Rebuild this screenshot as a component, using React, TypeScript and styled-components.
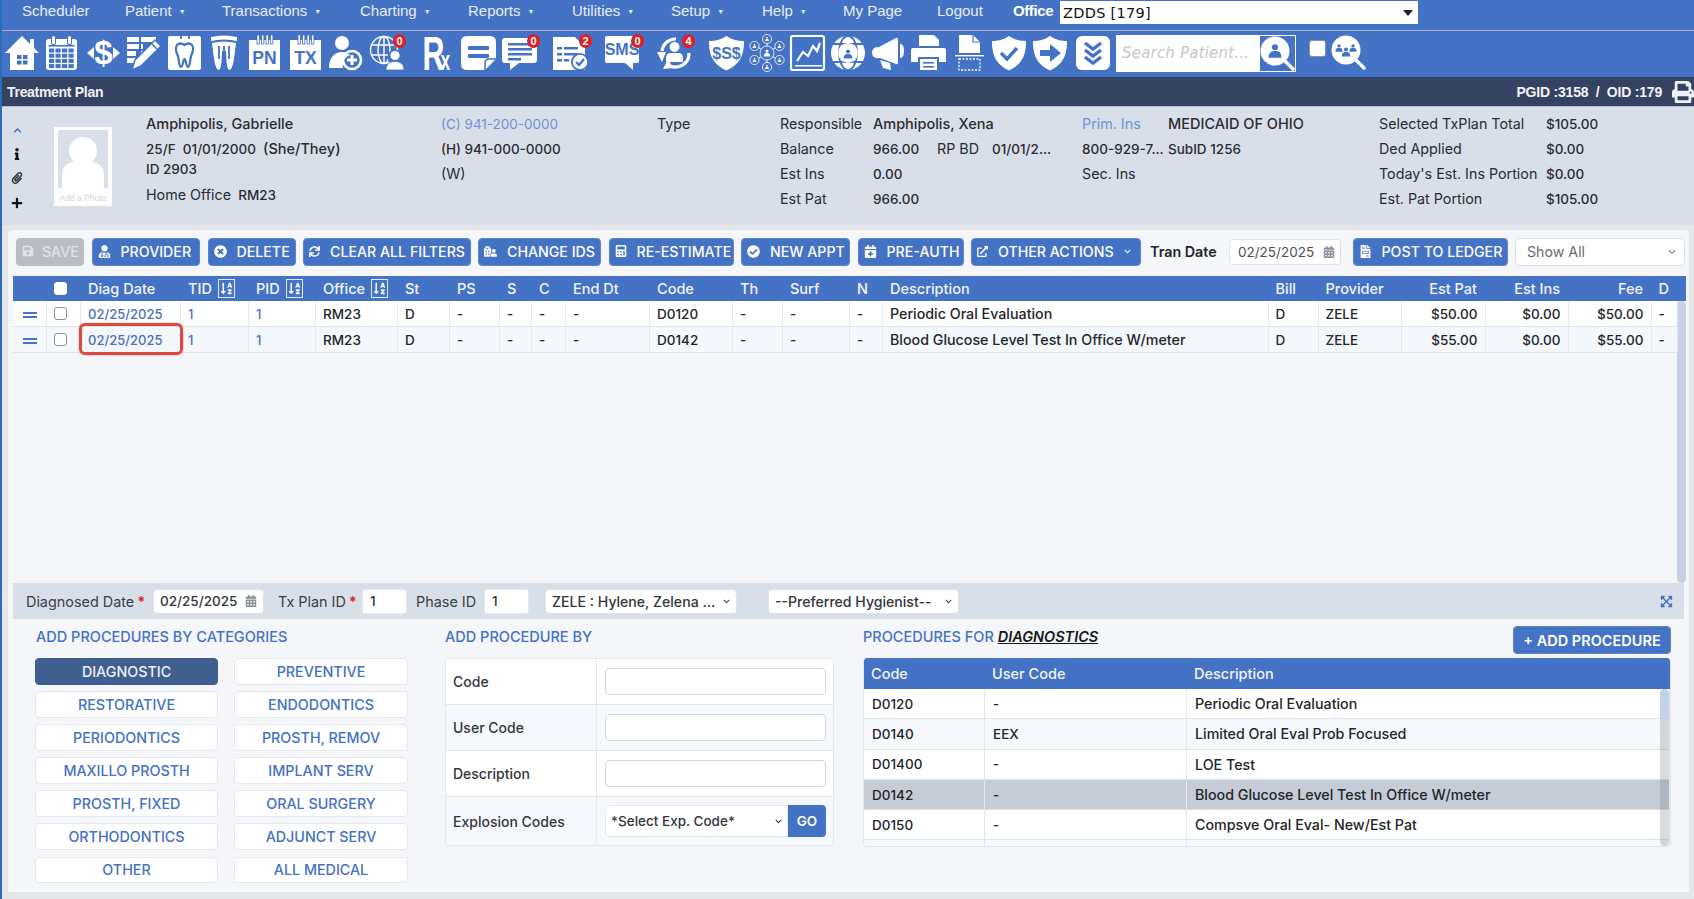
import React from 'react';
import styled, { createGlobalStyle } from 'styled-components';
import {
  FaSave, FaUserMd, FaTimesCircle, FaSync, FaCalculator, FaCheckCircle, FaCalendarPlus,
  FaExternalLinkAlt, FaCalendarAlt, FaFileInvoice, FaSortAlphaDown, FaInfo, FaPaperclip,
  FaPlus, FaChevronUp, FaChevronDown, FaExpandArrowsAlt, FaPrint, FaHospitalUser,
} from 'react-icons/fa';

const BLUE = '#4472c4';

const Global = createGlobalStyle`
  html, body { margin: 0; padding: 0; background: #fff; }
  * { box-sizing: border-box; }
  body { font-family: Inter, "Open Sans", "Liberation Sans", sans-serif; }
`;

const Page = styled.div`
  width: 1694px; height: 899px; overflow: hidden; display: flex; flex-direction: column;
  border-left: 2px solid #2b6cb8; background: #e4e6e9; color: #23262b; font-size: 13.5px;
`;
const Nav = styled.nav`
  height: 31px; flex: none; background: ${BLUE}; border-bottom: 1px solid #a9b6cf; display: flex; align-items: flex-start;
  padding-left: 20px; font-family: "Liberation Sans", Arial, sans-serif; font-size: 15px; color: #e9eef8;
`;
const NavItem = styled.div<{ $w: number }>`
  width: ${p => p.$w}px; flex: none; line-height: 22px; white-space: nowrap;
`;
const Caret = styled.span`
  font-size: 7px; margin-left: 7px; vertical-align: 2px;
`;
const OfficeLabel = styled(NavItem)`
  font-weight: 700; color: #fff; letter-spacing: -0.4px;
`;
const OfficeSelect = styled.div`
  width: 358px; height: 23px; margin-top: 1px; background: #fff; color: #111; display: flex; align-items: center;
  justify-content: space-between; padding: 0 5px 0 3px; font-family: "DejaVu Sans", sans-serif; font-size: 14.5px; letter-spacing: .3px;
`;
const OfficeArrow = styled.span`
  width: 0; height: 0; border-left: 5.5px solid transparent; border-right: 5.5px solid transparent; border-top: 6px solid #222;
`;
const Toolbar = styled.div`
  height: 46px; flex: none; background: ${BLUE}; display: flex; align-items: center; padding: 0 0 2px 3px;
`;
const Tool = styled.div<{ $w: number; $ml: number }>`
  position: relative; flex: none; width: ${p => p.$w}px; height: 36px; margin-left: ${p => p.$ml}px;
  svg { display: block; overflow: visible; }
`;
const Badge = styled.span<{ $r?: number }>`
  position: absolute; top: -1px; right: ${p => p.$r ?? 0}px; width: 13px; height: 14px; border-radius: 50%;
  background: #dd1f26; color: #fff; font: 700 11px/14px "Liberation Sans", sans-serif; text-align: center;
`;
const SearchBox = styled.div`
  width: 180px; height: 37px; margin-left: 6px; background: #fff; display: flex; flex: none; justify-content: space-between;
  border: 1px solid #fff;
`;
const SearchInput = styled.input`
  width: 140px; border: 0; outline: 0; background: transparent; padding: 0 5px; font: italic 15px "DejaVu Sans", sans-serif; letter-spacing: .2px;
  &::placeholder { color: #c6c6c6; opacity: 1; }
`;
const LensBtn = styled.div`
  width: 35px; height: 35px; background: ${BLUE};
`;
const TopCheck = styled.input`
  appearance: none; flex: none; width: 17px; height: 17px; margin: 0 0 9px 13px; background: #fff; border: 1px solid #8b8f96; border-radius: 3px;
`;
const TitleBar = styled.div`
  height: 30px; flex: none; background: #364261; color: #f1f3f7; display: flex; align-items: center; justify-content: space-between;
  padding: 0 0 0 5px; font-family: "Liberation Sans", Arial, sans-serif; font-size: 14px; border-bottom: 1px solid #b6bdcc;
`;
const TitleLeft = styled.span`
  font-weight: 700; letter-spacing: -0.3px; font-size: 14px;
`;
const TitleRight = styled.div`
  display: flex; align-items: center; gap: 10px; font-weight: 700; letter-spacing: -0.2px;
`;
const Header = styled.header`
  height: 118px; flex: none; background: #d8dfe9; display: flex; padding-top: 5px; position: relative;
`;
const SideIcons = styled.div`
  width: 52px; flex: none; display: flex; flex-direction: column; align-items: center; padding: 14px 22px 0 0; gap: 12.5px; color: #111;
`;
const Photo = styled.div`
  width: 58px; height: 79px; margin-top: 15px; background: #fff; flex: none; padding: 3px 4px 0; display: flex; flex-direction: column;
  align-items: center; font: 8.5px "Liberation Sans", sans-serif; color: #d0d6e0;
`;
const PhotoInner = styled.div`
  width: 100%; height: 58px; background: #d8dfe9; display: flex; align-items: flex-end; justify-content: center; margin-bottom: 5px;
`;
const InfoCol = styled.div<{ $w: number; $ml?: number }>`
  width: ${p => p.$w}px; margin-left: ${p => p.$ml ?? 0}px; flex: none;
`;
const InfoLine = styled.div<{ $h?: number; $top?: number }>`
  height: ${p => p.$h ?? 25}px; margin-top: ${p => p.$top ?? 0}px; line-height: ${p => p.$h ?? 24}px; white-space: nowrap; display: flex; align-items: baseline;
  font-weight: 500; color: #2a2d33;
`;
const Dim = styled.span`
  font-weight: 400; font-size: 14.3px;
`;
const Strong = styled.span`
  font-size: 14.5px;
`;
const Lab = styled.span<{ $w: number; $c?: string }>`
  width: ${p => p.$w}px; flex: none; color: ${p => p.$c ?? 'inherit'};
`;
const PhoneLink = styled.span`
  color: #6f93d8; font-weight: 400;
`;
const Main = styled.main`
  height: 664px; flex: none; margin: 4px 4px 0 5px; background: #f4f6f9; border: 1px solid #e1e5ea; border-top-color: #dfe3e9; border-radius: 5px 5px 0 0;
  padding: 7px 0 0 5px; display: flex; flex-direction: column;
`;
const ActionRow = styled.div`
  height: 29px; flex: none; display: flex; align-items: center; gap: 7.5px; padding-left: 3px;
`;
const ActionBtn = styled.button<{ $w: number; $off?: boolean; $ml?: number }>`
  width: ${p => p.$w}px; height: 28px; flex: none; margin-left: ${p => p.$ml ?? 0}px; border: 1px solid ${p => (p.$off ? '#b9bdc3' : '#5d86cf')}; border-radius: 4px;
  background: ${p => (p.$off ? '#b9bdc3' : BLUE)}; color: ${p => (p.$off ? '#dfe2e6' : '#fff')}; display: flex; align-items: center; gap: ${p => (p.$off ? 8 : 10)}px; padding: 0 0 1px 5px;
  font: 500 14.2px Inter, sans-serif; white-space: nowrap;
  svg { flex: none; }
`;
const Chev = styled.span`
  margin-left: auto; margin-right: 9px; display: flex;
`;
const TranLabel = styled.span`
  font-weight: 600; font-size: 14.3px; width: 70px; flex: none; margin: 0 1.5px; white-space: nowrap; color: #23262b;
`;
const DateBox = styled.div<{ $w: number; $ml?: number }>`
  width: ${p => p.$w}px; height: 26px; flex: none; margin-left: ${p => p.$ml ?? 0}px; background: #fff; border: 1px solid #dfe3e8; border-radius: 4px; display: flex; align-items: center; justify-content: space-between;
  padding: 0 5px 0 8px; color: #4b4f56; white-space: nowrap;
  svg { color: #8b8f96; }
`;
const ShowAll = styled(DateBox)`
  height: 28px; padding: 0 8px 0 11px; color: #666b73; font-size: 14.2px;
`;
const TEMPLATE = '34px 34px 100px 68px 67px 82px 52px 50px 32px 34px 84px 83px 50px 67px 33px 385.5px 50px 83.5px 83.5px 83px 83px';
const TableHead = styled.div`
  display: grid; grid-template-columns: ${TEMPLATE} 36px;
  height: 25px; margin: 10px 0 0 0; width: 1673px; background: ${BLUE}; color: #f2f5fb; font-weight: 500; font-size: 14.5px;
`;
const Th = styled.div<{ $right?: boolean }>`
  display: flex; align-items: center; justify-content: ${p => (p.$right ? 'flex-end' : 'flex-start')}; padding: 0 8.5px 1px 7px; gap: 6px; white-space: nowrap;
`;
const SortBox = styled.span`
  display: inline-flex; width: 17px; height: 19px; border: 1px solid #e3eaf7; align-items: center; justify-content: center;
`;
const BodyWrap = styled.div`
  height: 282px; width: 1673px; flex: none; display: flex;
`;
const Rows = styled.div`
  width: 1663px; flex: none;
`;
const Row = styled.div<{ $alt?: boolean }>`
  display: grid; grid-template-columns: ${TEMPLATE} 26px;
  height: 26px; background: ${p => (p.$alt ? '#f4f7fb' : '#fff')}; border-bottom: 1px solid #dfe4ea;
`;
const Td = styled.div<{ $right?: boolean; $link?: boolean }>`
  position: relative; display: flex; align-items: center; justify-content: ${p => (p.$right ? 'flex-end' : 'flex-start')}; padding: 0 7px;
  border-right: 1px solid #e6e9ee; white-space: nowrap; color: ${p => (p.$link ? '#4a70bb' : '#23262b')}; font-weight: 500; font-size: ${p => (p.$link ? '13px' : '13.5px')};
`;
const DescTd = styled(Td)`
  font-size: 14.25px;
`;
const Circled = styled(Td)`
  &::after { content: ''; position: absolute; left: -2px; right: -3px; top: -4px; bottom: -3px; border: 3px solid #e1473c; border-radius: 6px; box-shadow: 0 0 2px rgba(0,0,0,.35); }
`;
const Handle = styled.span`
  display: block; width: 14px; height: 6px; margin: 2px auto 0; border-top: 2px solid ${BLUE}; border-bottom: 2px solid ${BLUE};
`;
const Check = styled.input`
  appearance: none; width: 13px; height: 13px; margin: 0; background: #fff; border: 1px solid #8d9097; border-radius: 3px;
`;
const HeadCheck = styled(Check)`
  border-color: #fff;
`;
const ScrollThumb = styled.div`
  width: 9px; flex: none; margin-left: 1px; background: #c6d1e3; border-radius: 5px;
`;
const Bar = styled.div`
  height: 36px; width: 1671px; flex: none; background: #d8dfe9; display: flex; align-items: center; padding-left: 13px; color: #3c4047; position: relative;
`;
const BarLab = styled.span<{ $w: number; $ml?: number }>`
  width: ${p => p.$w}px; margin-left: ${p => p.$ml ?? 0}px; flex: none; white-space: nowrap; font-size: 14.4px;
`;
const Req = styled.b`
  color: #dd2b2b; margin-left: 3px;
`;
const BarInput = styled.input<{ $w: number; $mr: number }>`
  width: ${p => p.$w}px; height: 25px; flex: none; margin-right: ${p => p.$mr}px; background: #fff; border: 1px solid #e6e9ee; border-radius: 3px; padding: 0 7px; font: 500 13.5px Inter, sans-serif; color: #33363c;
`;
const BarSelect = styled(DateBox)`
  font-weight: 500; padding: 0 6px; color: #33363c; height: 25px; font-size: 14.1px;
  svg { color: #444; }
`;
const BarDate = styled(BarSelect)`
  font-size: 13.5px;
`;
const Expand = styled.span`
  position: absolute; right: 11px; top: 12px; color: ${BLUE}; display: flex;
`;
const Lower = styled.div`
  flex: 1; display: flex; padding-left: 23px;
`;
const Col = styled.section<{ $w: number; $ml?: number }>`
  width: ${p => p.$w}px; margin-left: ${p => p.$ml ?? 0}px; flex: none;
`;
const SecHead = styled.div`
  height: 39px; display: flex; justify-content: space-between; align-items: flex-start;
`;
const Heading = styled.h3`
  margin: 10px 0 0; font: 500 14.5px/16px Inter, sans-serif; color: ${BLUE}; white-space: nowrap;
`;
const HeadEm = styled.em`
  color: #15171b; font-weight: 600; text-decoration: underline;
`;
const AddBtn = styled.button`
  width: 158px; height: 28px; margin-top: 7px; background: ${BLUE}; border: 1px solid #5d86cf; border-radius: 4px; color: #fff; font: 600 14.5px Inter, sans-serif; white-space: nowrap; padding: 0;
`;
const CatGrid = styled.div`
  display: grid; grid-template-columns: 183px 174px; column-gap: 16px; row-gap: 6.3px; grid-auto-rows: 26.8px; margin-left: -1px;
`;
const CatBtn = styled.button<{ $on?: boolean }>`
  border: 1px solid ${p => (p.$on ? '#3f5f90' : '#e4e8ee')}; border-radius: 4px; background: ${p => (p.$on ? '#3f5f90' : '#fff')};
  color: ${p => (p.$on ? '#eef2f8' : BLUE)}; font: 500 14.3px Inter, sans-serif; padding: 0;
`;
const FormTable = styled.div`
  width: 389px; border: 1px solid #e3e7ec; border-radius: 4px; overflow: hidden;
`;
const FormRow = styled.div<{ $alt?: boolean; $h: number }>`
  display: grid; grid-template-columns: 151px 1fr; height: ${p => p.$h}px; background: ${p => (p.$alt ? '#f5f8fc' : '#fff')}; border-bottom: 1px solid #e1e5ea;
  &:last-child { border-bottom: 0; }
`;
const FormLabel = styled.div`
  display: flex; align-items: center; padding-left: 7px; border-right: 1px solid #e6e9ee; font-weight: 500; color: #33363c; font-size: 14px;
`;
const FormCell = styled.div`
  display: flex; align-items: center; padding: 0 7px 0 8px;
`;
const TextInput = styled.input`
  width: 100%; height: 27px; background: #fff; border: 1px solid #d3d6db; border-radius: 4px;
`;
const ExpSelect = styled.div`
  flex: 1; height: 32px; background: #fff; border: 1px solid #e6e9ee; border-radius: 4px 0 0 4px; display: flex; align-items: center; justify-content: space-between; padding: 0 5px; font-weight: 500; color: #33363c; white-space: nowrap;
`;
const GoBtn = styled.button`
  width: 38px; height: 32px; background: ${BLUE}; border: 0; border-radius: 0 4px 4px 0; color: #fff; font: 600 13.5px Inter, sans-serif; padding: 0;
`;
const ProcWrap = styled.div`
  position: relative; width: 808px; height: 189px; overflow: hidden; border-radius: 4px; border: 1px solid #e1e5ea; border-top: 0;
`;
const ProcHead = styled.div`
  height: 31px; background: ${BLUE}; color: #f2f5fb; display: grid; grid-template-columns: 121px 202px 1fr; align-items: center; font-weight: 500; font-size: 14.5px;
`;
const ProcTh = styled.div`
  padding-left: 7px;
`;
const ProcRow = styled.div<{ $alt?: boolean; $sel?: boolean }>`
  height: 30.3px; display: grid; grid-template-columns: 121px 202px 1fr; background: ${p => (p.$sel ? '#c5ccd6' : p.$alt ? '#f5f8fc' : '#fff')}; border-bottom: 1px solid #e0e4ea;
`;
const ProcTd = styled.div`
  display: flex; align-items: center; padding-left: 8px; border-right: 1px solid #e3e6eb; font-weight: 500; color: #23262b; white-space: nowrap;
`;
const ProcDesc = styled(ProcTd)`
  font-size: 14.25px;
`;
const ProcTrack = styled.div`
  position: absolute; right: 1px; top: 31px; bottom: 0; width: 9px; background: rgba(120,125,135,.28); border-radius: 5px;
`;
const ProcThumb = styled.div`
  width: 100%; height: 31px; background: #c3d2e8; border-radius: 5px;
`;

const S = ({ w, children }: { w: number; children: React.ReactNode }) => (
  <svg width={w} height={36} viewBox={`0 0 ${w} 36`} fill="#fff">{children}</svg>
);
const T = (p: { x: number; y: number; s: number; c?: string; children: React.ReactNode; f?: string }) => (
  <text x={p.x} y={p.y} fontSize={p.s} fontWeight={700} fill={p.c ?? BLUE} textAnchor="middle" fontFamily={p.f ?? '"Liberation Sans", Arial, sans-serif'}>{p.children}</text>
);

const PersonGlyph = ({ x, y, s, c }: { x: number; y: number; s: number; c: string }) => (
  <g fill={c}>
    <circle cx={x} cy={y - s * 0.42} r={s * 0.34} />
    <path d={`M${x - s * 0.72} ${y + s * 0.75} C${x - s * 0.72} ${y + s * 0.05} ${x - s * 0.3} ${y} ${x} ${y} C${x + s * 0.3} ${y} ${x + s * 0.72} ${y + s * 0.05} ${x + s * 0.72} ${y + s * 0.75} Z`} />
  </g>
);
const Shield = ({ d = 34 }: { d?: number }) => (
  <path d={`M${d / 2} 1 C${d * 0.66} 5 ${d * 0.84} 6 ${d} 6 C${d} 20 ${d * 0.9} 29 ${d / 2} 35.5 C${d * 0.1} 29 0 20 0 6 C${d * 0.16} 6 ${d * 0.34} 5 ${d / 2} 1 Z`} />
);

const tools: { w: number; ml: number; badge?: string; r?: number; el: React.ReactNode }[] = [
  { w: 34, ml: 0, el: <S w={34}><path d="M17 1 L34 18 L29 18 V35 H5 V18 H0 Z" /><rect x={25} y={4} width={4} height={9} /><g fill={BLUE}><rect x={12} y={20} width={4.5} height={4} /><rect x={18} y={20} width={4.5} height={4} /><rect x={12} y={25.5} width={4.5} height={4} /><rect x={18} y={25.5} width={4.5} height={4} /></g></S> },
  { w: 31, ml: 7, el: <S w={31}><rect x={0} y={4} width={31} height={31} rx={3} />{[6, 22].map(x => <g key={x}><rect x={x - 1} y={0} width={5} height={10} rx={2} fill={BLUE} /><rect x={x} y={1} width={3} height={8} rx={1.5} /></g>)}<rect x={2.5} y={10} width={26} height={1.6} fill={BLUE} />{[0, 1, 2, 3].map(r => [0, 1, 2, 3].map(c => <rect key={`${r}${c}`} x={3 + c * 6.5} y={13.5 + r * 5.2} width={5.2} height={4} fill={BLUE} />))}</S> },
  { w: 33, ml: 10, el: <S w={33}><T x={16.5} y={29} s={33} c="#fff">$</T><path d="M0 18 L7 12 V24 Z M33 18 L26 12 V24 Z" /></S> },
  { w: 34, ml: 7, el: <S w={34}>{[2, 9, 16, 23].map(y => <g key={y}><rect x={0} y={y} width={y > 14 ? 9 : 12} height={5} /><rect x={14} y={y} width={y > 8 ? 2 : 15} height={5} /></g>)}<path d="M28 5 L34 11 L14 31 L5 35 L8 25 Z" stroke={BLUE} strokeWidth={1.5} /><path d="M25 9 L30 14" stroke={BLUE} strokeWidth={1.5} /></S> },
  { w: 33, ml: 7, el: <S w={33}><rect x={0} y={1} width={33} height={34} rx={2} /><path d="M9 10 C12 7 15 9 16.5 10 C18 9 21 7 24 10 C26 13 25 17 23 21 C22 25 22 32 20 32 C18 32 18 24 16.5 24 C15 24 15 32 13 32 C11 32 11 25 10 21 C8 17 7 13 9 10 Z" fill="none" stroke={BLUE} strokeWidth={2.2} /><rect x={12} y={0} width={1.8} height={4} fill={BLUE} /><rect x={20} y={0} width={1.8} height={4} fill={BLUE} /></S> },
  { w: 26, ml: 10, el: <S w={26}><path d="M0 2 Q13 -1 26 2 L26 6 Q13 3 0 6 Z" /><path d="M1 8 Q13 5 25 8 L23.5 20 Q22 33 19 35 Q16 35 15.5 26 L15 16 H11 L10.5 26 Q10 35 7 35 Q4 33 2.5 20 Z" /><path d="M8 11 V24 M18 11 V24 M13 11 V18" stroke={BLUE} strokeWidth={1.8} fill="none" /></S> },
  { w: 31, ml: 12, el: <S w={31}><path d="M0 5 H31 V35 H0 Z" />{[8, 12.5, 17, 21.5].map(x => <rect key={x} x={x} y={0} width={2.4} height={9} stroke={BLUE} strokeWidth={.8} />)}<T x={15.5} y={29} s={17.5}>PN</T></S> },
  { w: 31, ml: 10, el: <S w={31}><path d="M0 5 H31 V35 H0 Z" />{[8, 12.5, 17, 21.5].map(x => <rect key={x} x={x} y={0} width={2.4} height={9} stroke={BLUE} strokeWidth={.8} />)}<T x={15.5} y={29} s={17.5}>TX</T></S> },
  { w: 33, ml: 8, el: <S w={33}><circle cx={13} cy={8} r={7} /><path d="M0 33 C0 22 6 17 13 17 C17 17 19 18 21 20 C15 22 13 28 14 33 Z" /><circle cx={23} cy={25} r={9} fill="none" stroke="#fff" strokeWidth={2.6} /><path d="M23 20 V30 M18 25 H28" stroke="#fff" strokeWidth={3} /></S> },
  { w: 35, ml: 8, badge: '0', r: -1, el: <S w={35}><g fill="none" stroke="#fff" strokeWidth={1.4}><circle cx={14} cy={15} r={13.5} /><ellipse cx={14} cy={15} rx={6} ry={13.5} /><path d="M14 1 V29 M1 10 H27 M1 20 H27" /></g><circle cx={25} cy={22} r={7.5} fill={BLUE} /><circle cx={25} cy={20.5} r={4.6} /><path d="M16 35 C16 29 20 26.5 25 26.5 C30 26.5 34 29 34 35 Z" stroke={BLUE} strokeWidth={.8} /></S> },
  { w: 30, ml: 18, el: <S w={30}><g transform="scale(.62 1)"><text x={-1} y={35} fontSize={49} fontWeight={700} fill="#fff" fontFamily='"Liberation Sans", Arial, sans-serif'>R<tspan dx={-6} fontSize={28}>x</tspan></text></g></S> },
  { w: 35, ml: 8, el: <S w={35}><path d="M6 1 H29 Q35 1 35 7 V24 L24 35 H6 Q0 35 0 29 V7 Q0 1 6 1 Z" /><path d="M35 24 H28 Q24 24 24 28 V35" fill="none" stroke={BLUE} strokeWidth={1.5} /><rect x={7} y={11} width={21} height={4} rx={1} fill={BLUE} /><rect x={7} y={19} width={21} height={4} rx={1} fill={BLUE} /></S> },
  { w: 37, ml: 6, badge: '0', r: -1, el: <S w={37}><path d="M3 3 H32 Q35 3 35 6 V25 Q35 28 32 28 H17 L8 35 V28 H3 Q0 28 0 25 V6 Q0 3 3 3 Z" />{[8, 13, 18, 23].map((y, i) => <rect key={y} x={6} y={y} width={i === 3 ? 13 : 24} height={2.5} fill={BLUE} />)}</S> },
  { w: 39, ml: 14, badge: '2', r: 0, el: <S w={39}><path d="M0 2 H22 L32 12 V35 H0 Z" />{[12, 18, 24].map(y => <g key={y} fill={BLUE}><rect x={4} y={y} width={5} height={2.5} /><rect x={11} y={y} width={y > 20 ? 5 : 14} height={2.5} /></g>)}<circle cx={27} cy={27} r={9} fill={BLUE} /><circle cx={27} cy={27} r={7.2} /><path d="M23 27 L26 30 L31 24" fill="none" stroke={BLUE} strokeWidth={2.2} /></S> },
  { w: 38, ml: 13, badge: '0', r: -1, el: <S w={38}><path d="M2 1 H32 Q34 1 34 3 V26 Q34 28 32 28 H28 L28 35 L20 28 H2 Q0 28 0 26 V3 Q0 1 2 1 Z" /><T x={17} y={20} s={16}>SMS</T></S> },
  { w: 38, ml: 14, badge: '4', r: 0, el: <S w={38}><g fill="none" stroke="#fff" strokeWidth={3.2}><path d="M5 16 A13.5 13.5 0 0 1 19 4" /><path d="M32 18 A13.5 13.5 0 0 1 10 29" /></g><path d="M0 17 L9 17 L5 27 Z M11 24 L6 34 L16 33 Z" /><circle cx={17.5} cy={12} r={5} /><path d="M9 27 V23 Q9 18 14 18 H21 Q26 18 26 23 V27 Z" /></S> },
  { w: 35, ml: 14, el: <S w={35}><Shield d={35} /><T x={17.5} y={24} s={16}>$S$</T></S> },
  { w: 34, ml: 6, el: <S w={34}><g stroke="#fff" strokeWidth={1}><path d="M17 6 V30 M6 11 L28 25 M28 11 L6 25" /></g>{[[17, 4, 3.6], [17, 32, 3.6], [4.5, 11, 3.6], [29.5, 11, 3.6], [4.5, 25, 3.6], [29.5, 25, 3.6], [17, 18, 6]].map(([x, y, r]) => <g key={`${x}${y}`}><circle cx={x} cy={y} r={r + 1} fill={BLUE} stroke="#fff" strokeWidth={.8} /><PersonGlyph x={x} y={y} s={r * .75} c="#fff" /></g>)}</S> },
  { w: 35, ml: 6, el: <S w={35}><rect x={1} y={1} width={33} height={34} rx={2} fill="none" stroke="#fff" strokeWidth={2.2} /><path d="M7 26 L13 17 L18 21 L23 11 L27 16 L30 8" fill="none" stroke="#fff" strokeWidth={2.2} /><rect x={5} y={30} width={27} height={1.5} /></S> },
  { w: 34, ml: 6, el: <S w={34}><circle cx={17} cy={18} r={17} /><g fill="none" stroke={BLUE} strokeWidth={1.8}><ellipse cx={17} cy={18} rx={9} ry={17} /><path d="M2 9 H32 M2 27 H32" /></g><circle cx={17} cy={18} r={10} /><PersonGlyph x={17} y={19} s={6} c={BLUE} /></S> },
  { w: 32, ml: 7, el: <S w={32}><path d="M7 12 L24 3 Q26 2 26 5 V27 Q26 30 24 29 L8 23 Q0 24 0 17.5 Q0 12 7 12 Z" /><path d="M28 9 Q32 9 32 16 Q32 23 28 23 Z" /><path d="M8 25 L18 28 L19 35 L11 33 Z" /></S> },
  { w: 35, ml: 7, el: <S w={35}><path d="M8 0 H23 L28 5 V11 H8 Z" /><path d="M2 13 H33 Q35 13 35 15 V27 H28 V22 H7 V27 H0 V15 Q0 13 2 13 Z" /><rect x={9} y={24} width={17} height={11} /><g fill={BLUE}><rect x={12} y={27} width={11} height={1.6} /><rect x={12} y={31} width={11} height={1.6} /></g></S> },
  { w: 29, ml: 9, el: <S w={29}><path d="M4 0 H18 L25 7 V18 H4 Z" /><path d="M18 0 V7 H25" fill="none" stroke={BLUE} strokeWidth={1.2} /><rect x={0} y={20} width={29} height={1.4} /><rect x={4} y={24} width={21} height={11} fill="none" stroke="#fff" strokeWidth={1.3} strokeDasharray="2 1.5" /></S> },
  { w: 34, ml: 8, el: <S w={34}><Shield /><path d="M9 18 L15 24 L25 13" fill="none" stroke={BLUE} strokeWidth={3.4} /></S> },
  { w: 34, ml: 7, el: <S w={34}><Shield /><path d="M7 15 H17 V9 L28 18 L17 27 V21 H7 Z" fill={BLUE} /></S> },
  { w: 34, ml: 9, el: <S w={34}><rect x={0} y={1} width={34} height={34} rx={6} /><g fill="none" stroke={BLUE} strokeWidth={3.4}><path d="M9 8 L17 14 L25 8" /><path d="M9 15 L17 21 L25 15" /><path d="M9 22 L17 28 L25 22" /></g></S> },
];

const Lens = ({ children }: { children: React.ReactNode }) => (
  <svg width={35} height={36} viewBox="0 0 35 36">
    <circle cx={15} cy={15} r={14.5} fill="#fff" />
    {children}
    <path d="M25 25 L33 33" stroke="#fff" strokeWidth={3.4} strokeLinecap="round" />
  </svg>
);

const navItems: [string, number, boolean][] = [
  ['Scheduler', 103, false], ['Patient', 97, true], ['Transactions', 138, true], ['Charting', 108, true], ['Reports', 104, true],
  ['Utilities', 99, true], ['Setup', 91, true], ['Help', 81, true], ['My Page', 94, false], ['Logout', 76, false],
];

const actions: { w: number; t: string; i: React.ReactNode; off?: boolean }[] = [
  { w: 68, t: 'SAVE', i: <FaSave size={12} />, off: true },
  { w: 108.5, t: 'PROVIDER', i: <FaUserMd size={13} /> },
  { w: 88, t: 'DELETE', i: <FaTimesCircle size={13} /> },
  { w: 167.5, t: 'CLEAR ALL FILTERS', i: <FaSync size={11} /> },
  { w: 123, t: 'CHANGE IDS', i: <FaHospitalUser size={13} /> },
  { w: 125, t: 'RE-ESTIMATE', i: <FaCalculator size={12} /> },
  { w: 109, t: 'NEW APPT', i: <FaCheckCircle size={13} /> },
  { w: 106, t: 'PRE-AUTH', i: <FaCalendarPlus size={13} /> },
];

const cols: { l: string; sort?: boolean; right?: boolean }[] = [
  { l: '' }, { l: '' }, { l: 'Diag Date' }, { l: 'TID', sort: true }, { l: 'PID', sort: true }, { l: 'Office', sort: true }, { l: 'St' }, { l: 'PS' }, { l: 'S' }, { l: 'C' },
  { l: 'End Dt' }, { l: 'Code' }, { l: 'Th' }, { l: 'Surf' }, { l: 'N' }, { l: 'Description' }, { l: 'Bill' }, { l: 'Provider' },
  { l: 'Est Pat', right: true }, { l: 'Est Ins', right: true }, { l: 'Fee', right: true }, { l: 'D' },
];

const rows = [
  { code: 'D0120', desc: 'Periodic Oral Evaluation', pat: '$50.00', fee: '$50.00' },
  { code: 'D0142', desc: 'Blood Glucose Level Test In Office W/meter', pat: '$55.00', fee: '$55.00' },
];

const cats = ['DIAGNOSTIC', 'PREVENTIVE', 'RESTORATIVE', 'ENDODONTICS', 'PERIODONTICS', 'PROSTH, REMOV', 'MAXILLO PROSTH', 'IMPLANT SERV', 'PROSTH, FIXED', 'ORAL SURGERY', 'ORTHODONTICS', 'ADJUNCT SERV', 'OTHER', 'ALL MEDICAL'];

const procs = [
  ['D0120', '-', 'Periodic Oral Evaluation'], ['D0140', 'EEX', 'Limited Oral Eval Prob Focused'], ['D01400', '-', 'LOE Test'],
  ['D0142', '-', 'Blood Glucose Level Test In Office W/meter'], ['D0150', '-', 'Compsve Oral Eval- New/Est Pat'], ['', '', ''],
];

export default function App() {
  return (
    <Page>
      <Global />
      <Nav>
        {navItems.map(([t, w, c]) => (
          <NavItem key={t} $w={w}>{t}{c && <Caret>▼</Caret>}</NavItem>
        ))}
        <OfficeLabel $w={47}>Office</OfficeLabel>
        <OfficeSelect>ZDDS [179]<OfficeArrow /></OfficeSelect>
      </Nav>
      <Toolbar>
        {tools.map((t, i) => (
          <Tool key={i} $w={t.w} $ml={t.ml}>
            {t.el}
            {t.badge && <Badge $r={t.r}>{t.badge}</Badge>}
          </Tool>
        ))}
        <SearchBox>
          <SearchInput placeholder="Search Patient..." readOnly />
          <LensBtn>
            <Lens><PersonGlyph x={15} y={15} s={9} c={BLUE} /></Lens>
          </LensBtn>
        </SearchBox>
        <TopCheck type="checkbox" readOnly />
        <Tool $w={35} $ml={5}>
          <Lens>
            <PersonGlyph x={8} y={13} s={5} c={BLUE} />
            <PersonGlyph x={22} y={13} s={5} c={BLUE} />
            <PersonGlyph x={15} y={17} s={6} c={BLUE} />
          </Lens>
        </Tool>
      </Toolbar>
      <TitleBar>
        <TitleLeft>Treatment Plan</TitleLeft>
        <TitleRight>PGID :3158&nbsp; / &nbsp;OID :179 <FaPrint size={22} color="#eef1f6" /></TitleRight>
      </TitleBar>
      <Header>
        <SideIcons>
          <FaChevronUp size={9} color={BLUE} />
          <FaInfo size={12} />
          <FaPaperclip size={12} color="#333" />
          <FaPlus size={12} />
        </SideIcons>
        <Photo>
          <PhotoInner>
            <svg width={42} height={52} viewBox="0 0 42 52" fill="#fff"><circle cx={21} cy={15} r={14} /><path d="M0 52 V40 Q0 27 12 26 H30 Q42 27 42 40 V52 Z" /></svg>
          </PhotoInner>
          Add a Photo
        </Photo>
        <InfoCol $w={295} $ml={34}>
          <InfoLine><Strong>Amphipolis, Gabrielle</Strong></InfoLine>
          <InfoLine>25/F &nbsp;01/01/2000 &nbsp;<Strong>(She/They)</Strong></InfoLine>
          <InfoLine $h={14}>ID 2903</InfoLine>
          <InfoLine $h={25} $top={6}><Dim>Home Office</Dim>&nbsp; RM23</InfoLine>
        </InfoCol>
        <InfoCol $w={216}>
          <InfoLine><PhoneLink>(C) 941-200-0000</PhoneLink></InfoLine>
          <InfoLine>(H) 941-000-0000</InfoLine>
          <InfoLine><Dim>(W)</Dim></InfoLine>
        </InfoCol>
        <InfoCol $w={123}>
          <InfoLine><Dim>Type</Dim></InfoLine>
        </InfoCol>
        <InfoCol $w={302}>
          <InfoLine><Lab $w={93}><Dim>Responsible</Dim></Lab><Strong>Amphipolis, Xena</Strong></InfoLine>
          <InfoLine><Lab $w={93}><Dim>Balance</Dim></Lab><Lab $w={64}>966.00</Lab><Lab $w={55}><Dim>RP BD</Dim></Lab>01/01/2...</InfoLine>
          <InfoLine><Lab $w={93}><Dim>Est Ins</Dim></Lab>0.00</InfoLine>
          <InfoLine><Lab $w={93}><Dim>Est Pat</Dim></Lab>966.00</InfoLine>
        </InfoCol>
        <InfoCol $w={297}>
          <InfoLine><Lab $w={86} $c="#6f93d8"><Dim>Prim. Ins</Dim></Lab><Strong>MEDICAID OF OHIO</Strong></InfoLine>
          <InfoLine><Lab $w={86}>800-929-7...</Lab>SubID 1256</InfoLine>
          <InfoLine><Dim>Sec. Ins</Dim></InfoLine>
        </InfoCol>
        <InfoCol $w={300}>
          <InfoLine><Lab $w={167}><Dim>Selected TxPlan Total</Dim></Lab>$105.00</InfoLine>
          <InfoLine><Lab $w={167}><Dim>Ded Applied</Dim></Lab>$0.00</InfoLine>
          <InfoLine><Lab $w={167}><Dim>Today's Est. Ins Portion</Dim></Lab>$0.00</InfoLine>
          <InfoLine><Lab $w={167}><Dim>Est. Pat Portion</Dim></Lab>$105.00</InfoLine>
        </InfoCol>
      </Header>
      <Main>
        <ActionRow>
          {actions.map(a => (
            <ActionBtn key={a.t} $w={a.w} $off={a.off}>{a.i}{a.t}</ActionBtn>
          ))}
          <ActionBtn $w={170}><FaExternalLinkAlt size={11} />OTHER ACTIONS<Chev><FaChevronDown size={7} /></Chev></ActionBtn>
          <TranLabel>Tran Date</TranLabel>
          <DateBox $w={112}>02/25/2025<FaCalendarAlt size={12} /></DateBox>
          <ActionBtn $w={155} $ml={4}><FaFileInvoice size={13} />POST TO LEDGER</ActionBtn>
          <ShowAll $w={170}>Show All<FaChevronDown size={8} /></ShowAll>
        </ActionRow>
        <TableHead>
          {cols.map((c, i) => (
            <Th key={i} $right={c.right}>
              {i === 1 ? <HeadCheck type="checkbox" readOnly /> : c.l}
              {c.sort && <SortBox><FaSortAlphaDown size={13} /></SortBox>}
            </Th>
          ))}
        </TableHead>
        <BodyWrap>
          <Rows>
            {rows.map((r, i) => (
              <Row key={r.code} $alt={i === 1}>
                <Td><Handle /></Td>
                <Td><Check type="checkbox" readOnly /></Td>
                {i === 1 ? <Circled $link>02/25/2025</Circled> : <Td $link>02/25/2025</Td>}
                <Td $link>1</Td>
                <Td $link>1</Td>
                <Td>RM23</Td>
                <Td>D</Td>
                <Td>-</Td>
                <Td>-</Td>
                <Td>-</Td>
                <Td>-</Td>
                <Td>{r.code}</Td>
                <Td>-</Td>
                <Td>-</Td>
                <Td>-</Td>
                <DescTd>{r.desc}</DescTd>
                <Td>D</Td>
                <Td>ZELE</Td>
                <Td $right>{r.pat}</Td>
                <Td $right>$0.00</Td>
                <Td $right>{r.fee}</Td>
                <Td>-</Td>
              </Row>
            ))}
          </Rows>
          <ScrollThumb />
        </BodyWrap>
        <Bar>
          <BarLab $w={127}>Diagnosed Date<Req>*</Req></BarLab>
          <BarDate $w={111}>02/25/2025<FaCalendarAlt size={12} color="#8b8f96" /></BarDate>
          <BarLab $w={84} $ml={14}>Tx Plan ID<Req>*</Req></BarLab>
          <BarInput $w={45} $mr={9} value="1" readOnly />
          <BarLab $w={68}>Phase ID</BarLab>
          <BarInput $w={45} $mr={16} value="1" readOnly />
          <BarSelect $w={192}>ZELE : Hylene, Zelena ...<FaChevronDown size={7} /></BarSelect>
          <BarSelect $w={191} $ml={31}>--Preferred Hygienist--<FaChevronDown size={7} /></BarSelect>
          <Expand><FaExpandArrowsAlt size={13} /></Expand>
        </Bar>
        <Lower>
          <Col $w={373}>
            <SecHead><Heading>ADD PROCEDURES BY CATEGORIES</Heading></SecHead>
            <CatGrid>
              {cats.map((c, i) => <CatBtn key={c} $on={i === 0}>{c}</CatBtn>)}
            </CatGrid>
          </Col>
          <Col $w={388} $ml={36}>
            <SecHead><Heading>ADD PROCEDURE BY</Heading></SecHead>
            <FormTable>
              <FormRow $h={46}><FormLabel>Code</FormLabel><FormCell><TextInput readOnly /></FormCell></FormRow>
              <FormRow $h={46} $alt><FormLabel>User Code</FormLabel><FormCell><TextInput readOnly /></FormCell></FormRow>
              <FormRow $h={46}><FormLabel>Description</FormLabel><FormCell><TextInput readOnly /></FormCell></FormRow>
              <FormRow $h={48} $alt>
                <FormLabel>Explosion Codes</FormLabel>
                <FormCell>
                  <ExpSelect>*Select Exp. Code*<FaChevronDown size={7} /></ExpSelect>
                  <GoBtn>GO</GoBtn>
                </FormCell>
              </FormRow>
            </FormTable>
          </Col>
          <Col $w={808} $ml={30}>
            <SecHead>
              <Heading>PROCEDURES FOR <HeadEm>DIAGNOSTICS</HeadEm></Heading>
              <AddBtn>+ ADD PROCEDURE</AddBtn>
            </SecHead>
            <ProcWrap>
              <ProcHead><ProcTh>Code</ProcTh><ProcTh>User Code</ProcTh><ProcTh>Description</ProcTh></ProcHead>
              {procs.map((p, i) => (
                <ProcRow key={i} $alt={i % 2 === 1} $sel={i === 3}>
                  <ProcTd>{p[0]}</ProcTd><ProcTd>{p[1]}</ProcTd><ProcDesc>{p[2]}</ProcDesc>
                </ProcRow>
              ))}
              <ProcTrack><ProcThumb /></ProcTrack>
            </ProcWrap>
          </Col>
        </Lower>
      </Main>
    </Page>
  );
}
